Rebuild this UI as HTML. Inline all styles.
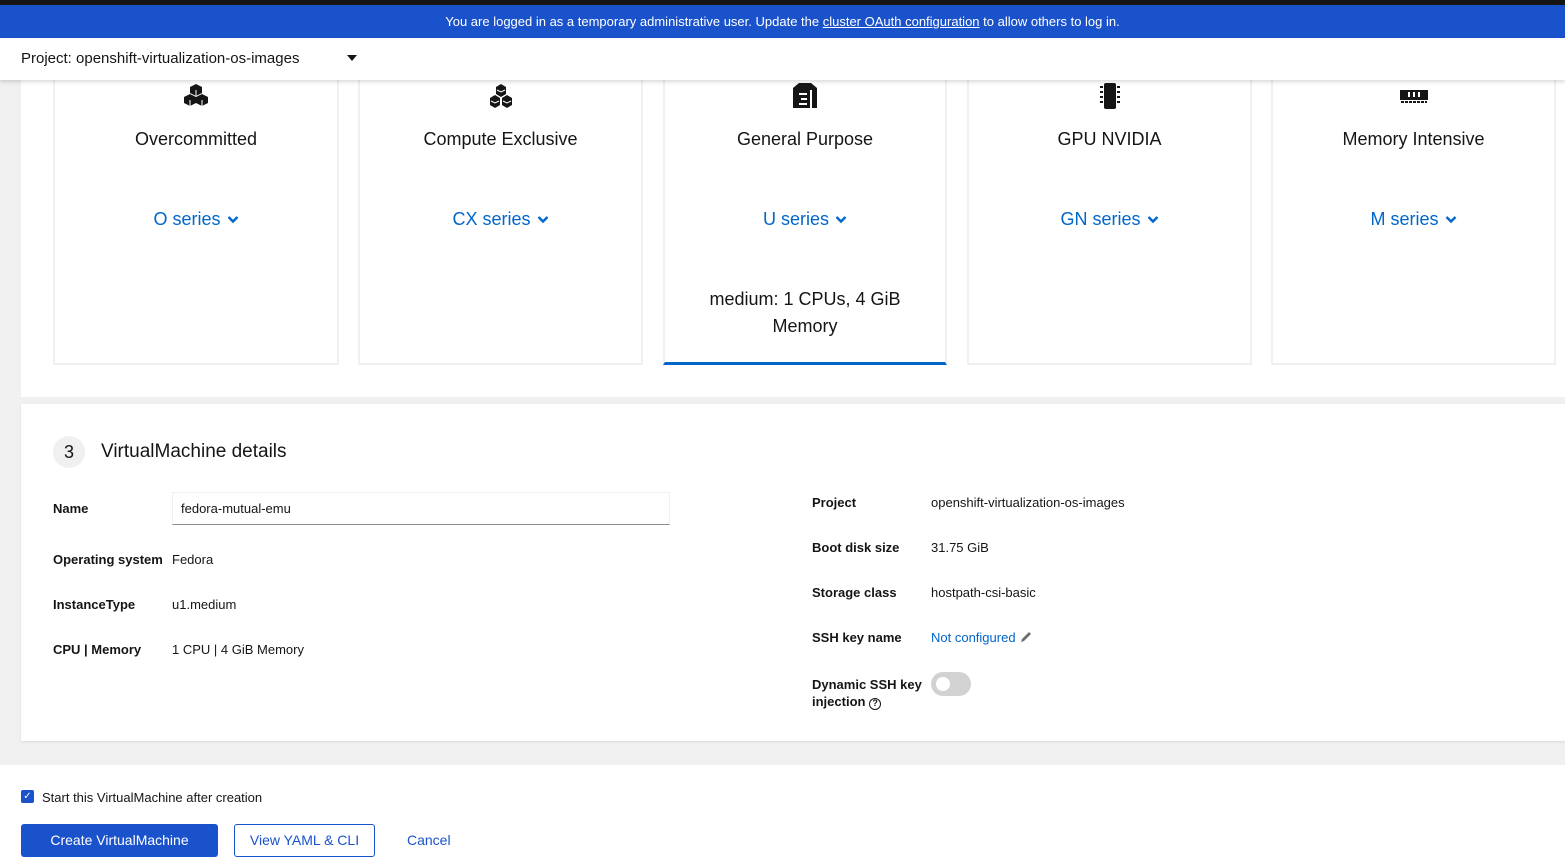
<!DOCTYPE html>
<html><head><meta charset="utf-8"><style>
*{box-sizing:border-box;margin:0;padding:0}
body{width:1565px;height:857px;overflow:hidden;background:#f0f0f0;font-family:"Liberation Sans",sans-serif;color:#151515;position:relative}
.a{position:absolute}
.card{position:absolute;top:70px;height:295px;border:2px solid #f0f0f0;background:#fff;text-align:center}
.card .t{position:absolute;top:57px;left:0;right:0;font-size:18px}
.card .s{position:absolute;top:137px;left:0;right:0;font-size:18px;color:#0066cc}
.card .s svg{margin-left:6px;vertical-align:1px}
.card svg.ic{position:absolute;top:10px;left:50%;margin-left:-14px}
.lbl{position:absolute;font-size:13px;font-weight:bold}
.val{position:absolute;font-size:13px}
</style></head><body>
<div class="a" style="left:0;top:0;width:1565px;height:5px;background:#151515"></div>
<div class="a" style="left:0;top:5px;width:1565px;height:33px;background:#1a52cc;color:#fff;font-size:13px;text-align:center;line-height:33px">You are logged in as a temporary administrative user. Update the <u>cluster OAuth configuration</u> to allow others to log in.</div>

<div class="a" style="left:21px;top:80px;width:1544px;height:317px;background:#fff"></div>
<div class="card" style="left:53px;width:286px"><svg class="ic" width="28" height="28" viewBox="0 0 28 28"><path d="M14 2l6 3v6l-6 3-6-3V5zM8 12l6 3v6l-6 3-6-3v-6zM20 12l6 3v6l-6 3-6-3v-6z" fill="#151515"/><path d="M8 18v6M20 18v6M14 8v6" stroke="#fff" stroke-width="1"/></svg><div class="t">Overcommitted</div><div class="s">O series<svg width="12" height="9" viewBox="0 0 12 9"><path d="M1.5 2l4.5 4.5L10.5 2" fill="none" stroke="#0066cc" stroke-width="2.4"/></svg></div></div>
<div class="card" style="left:358px;width:285px"><svg class="ic" width="28" height="28" viewBox="0 0 28 28"><path d="M14 2l5 3v7l-5 3-5-3V5zM8 13l5 3v7l-5 3-5-3v-7zM20 13l5 3v7l-5 3-5-3v-7z" fill="#151515"/><path d="M10 8l4 2 4-2M4 19l4 2 4-2M16 19l4 2 4-2" stroke="#fff" fill="none"/></svg><div class="t">Compute Exclusive</div><div class="s">CX series<svg width="12" height="9" viewBox="0 0 12 9"><path d="M1.5 2l4.5 4.5L10.5 2" fill="none" stroke="#0066cc" stroke-width="2.4"/></svg></div></div>
<div class="card" style="left:663px;width:284px;border-bottom:3px solid #0066cc"><svg class="ic" width="28" height="28" viewBox="0 0 28 28"><path d="M2 6l6-5h12l6 5v20H2z" fill="#151515"/><rect x="8" y="11" width="8" height="2" fill="#fff"/><rect x="10" y="16" width="6" height="2" fill="#fff"/><rect x="8" y="21" width="8" height="2" fill="#fff"/><rect x="19" y="8" width="2" height="18" fill="#fff"/></svg><div class="t">General Purpose</div><div class="s">U series<svg width="12" height="9" viewBox="0 0 12 9"><path d="M1.5 2l4.5 4.5L10.5 2" fill="none" stroke="#0066cc" stroke-width="2.4"/></svg></div><div class="a" style="top:214px;left:0;right:0;font-size:18px;line-height:27px">medium: 1 CPUs, 4 GiB<br>Memory</div></div>
<div class="card" style="left:967px;width:285px"><svg class="ic" width="28" height="28" viewBox="0 0 28 28"><rect x="8" y="1" width="12" height="26" rx="2" fill="#151515"/><path d="M4 5h3M4 10h3M4 15h3M4 20h3M21 5h3M21 10h3M21 15h3M21 20h3" stroke="#151515" stroke-width="2"/></svg><div class="t">GPU NVIDIA</div><div class="s">GN series<svg width="12" height="9" viewBox="0 0 12 9"><path d="M1.5 2l4.5 4.5L10.5 2" fill="none" stroke="#0066cc" stroke-width="2.4"/></svg></div></div>
<div class="card" style="left:1271px;width:285px"><svg class="ic" width="28" height="28" viewBox="0 0 28 28"><rect x="0" y="8" width="28" height="10" fill="#151515"/><rect x="8" y="10" width="2" height="5" fill="#fff"/><rect x="13" y="10" width="2" height="5" fill="#fff"/><rect x="18" y="10" width="2" height="5" fill="#fff"/><path d="M1 20h26" stroke="#151515" stroke-width="2" stroke-dasharray="3 1"/></svg><div class="t">Memory Intensive</div><div class="s">M series<svg width="12" height="9" viewBox="0 0 12 9"><path d="M1.5 2l4.5 4.5L10.5 2" fill="none" stroke="#0066cc" stroke-width="2.4"/></svg></div></div>

<div class="a" style="left:0;top:38px;width:1565px;height:42px;background:#fff;box-shadow:0 2px 4px rgba(0,0,0,.15)"><span class="a" style="left:21px;top:12px;font-size:15px">Project: openshift-virtualization-os-images</span><span class="a" style="left:347px;top:17px;width:0;height:0;border-left:5px solid transparent;border-right:5px solid transparent;border-top:6px solid #151515"></span></div>

<div class="a" style="left:21px;top:404px;width:1544px;height:337px;background:#fff;box-shadow:0 1px 2px rgba(0,0,0,.1)"></div>
<div class="a" style="left:53px;top:436px;width:32px;height:32px;border-radius:50%;background:#f0f0f0;text-align:center;line-height:32px;font-size:18px">3</div>
<div class="a" style="left:101px;top:441px;font-size:19px">VirtualMachine details</div>
<div class="lbl" style="left:53px;top:501px">Name</div>
<div class="a" style="left:172px;top:492px;width:498px;height:33px;border:1px solid #f0f0f0;border-bottom:1px solid #8a8d90;font-size:13px;padding:8px 8px">fedora-mutual-emu</div>
<div class="lbl" style="left:53px;top:552px">Operating system</div><div class="val" style="left:172px;top:552px">Fedora</div>
<div class="lbl" style="left:53px;top:597px">InstanceType</div><div class="val" style="left:172px;top:597px">u1.medium</div>
<div class="lbl" style="left:53px;top:642px">CPU | Memory</div><div class="val" style="left:172px;top:642px">1 CPU | 4 GiB Memory</div>
<div class="lbl" style="left:812px;top:495px">Project</div><div class="val" style="left:931px;top:495px">openshift-virtualization-os-images</div>
<div class="lbl" style="left:812px;top:540px">Boot disk size</div><div class="val" style="left:931px;top:540px">31.75 GiB</div>
<div class="lbl" style="left:812px;top:585px">Storage class</div><div class="val" style="left:931px;top:585px">hostpath-csi-basic</div>
<div class="lbl" style="left:812px;top:630px">SSH key name</div><div class="val" style="left:931px;top:630px;color:#0066cc">Not configured <svg width="14" height="14" viewBox="0 0 14 14" style="vertical-align:-2px"><path d="M2 12l1-3 7-7 2 2-7 7z" fill="#6a6e73"/></svg></div>
<div class="lbl" style="left:812px;top:676px;line-height:17px">Dynamic SSH key<br>injection <span style="display:inline-block;width:12px;height:12px;border:1.5px solid #151515;border-radius:50%;font-size:9px;line-height:9px;text-align:center">?</span></div>
<div class="a" style="left:931px;top:672px;width:40px;height:24px;border-radius:12px;background:#d2d2d2"><div class="a" style="left:5px;top:5px;width:14px;height:14px;border-radius:50%;background:#fff"></div></div>

<div class="a" style="left:0;top:765px;width:1565px;height:92px;background:#fff"></div>
<div class="a" style="left:21px;top:790px;width:13px;height:13px;background:#1a52cc;border-radius:2px;color:#fff;font-size:10px;text-align:center;line-height:13px">&#10003;</div>
<div class="a" style="left:42px;top:790px;font-size:13px">Start this VirtualMachine after creation</div>
<div class="a" style="left:21px;top:824px;width:197px;height:33px;background:#1a52cc;border-radius:3px;color:#fff;font-size:14px;text-align:center;line-height:33px">Create VirtualMachine</div>
<div class="a" style="left:234px;top:824px;width:141px;height:33px;border:1px solid #1a52cc;border-radius:3px;color:#1a52cc;font-size:14px;text-align:center;line-height:31px">View YAML &amp; CLI</div>
<div class="a" style="left:407px;top:832px;color:#1a52cc;font-size:14px">Cancel</div>
</body></html>
